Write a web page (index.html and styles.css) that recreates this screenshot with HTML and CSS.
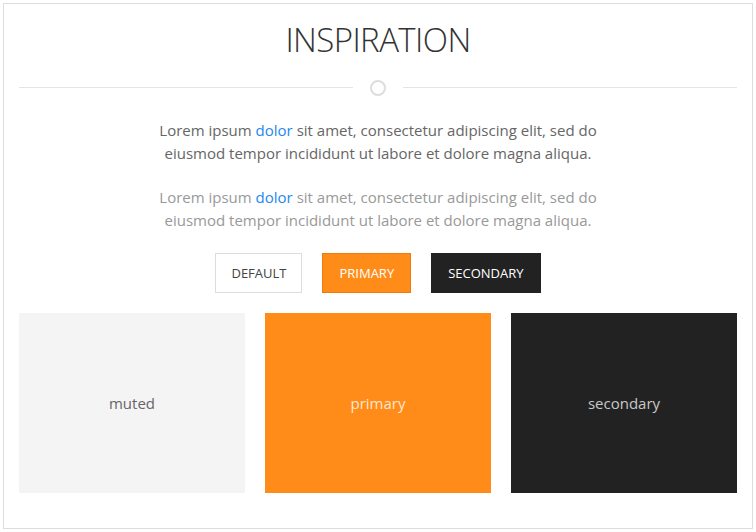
FILE: index.html
```
<!DOCTYPE html>
<html>
<head>
<meta charset="utf-8">
<link rel="stylesheet" href="styles.css">
</head>
<body>
<div class="card">
  <h1 class="title">INSPIRATION</h1>
  <div class="divider"><span class="line"></span><span class="ring"></span><span class="line"></span></div>
  <p class="lead">Lorem ipsum <a href="#">dolor</a> sit amet, consectetur adipiscing elit, sed do eiusmod tempor incididunt ut labore et dolore magna aliqua.</p>
  <p class="lead faded">Lorem ipsum <a href="#">dolor</a> sit amet, consectetur adipiscing elit, sed do eiusmod tempor incididunt ut labore et dolore magna aliqua.</p>
  <div class="buttons">
    <a class="btn btn-default" href="#">Default</a>
    <a class="btn btn-primary" href="#">Primary</a>
    <a class="btn btn-secondary" href="#">Secondary</a>
  </div>
  <div class="tiles">
    <div class="tile tile-muted">muted</div>
    <div class="tile tile-primary">primary</div>
    <div class="tile tile-secondary">secondary</div>
  </div>
</div>
</body>
</html>
```
FILE: styles.css
```
* { box-sizing: border-box; }
html, body { margin: 0; padding: 0; background: #fff; }
body {
  padding: 3px;
  font-family: "Open Sans", "Noto Sans", sans-serif;
  color: #666;
}
.card {
  width: 750px;
  height: 526px;
  border: 1px solid #ddd;
  padding: 15px 15px 0;
}
.title {
  margin: 0;
  text-align: center;
  font-weight: 300;
  font-size: 33px;
  letter-spacing: -0.6px;
  line-height: 41px;
  color: #333;
}
.divider {
  display: flex;
  align-items: center;
  margin-top: 20px;
  height: 15px;
}
.line { flex: 1; height: 1px; background: #e5e5e5; }
.ring {
  width: 16px; height: 16px;
  border: 2px solid #ddd;
  border-radius: 50%;
  margin: 0 17px;
}
.lead {
  width: 470px;
  margin: 24px auto 0;
  text-align: center;
  font-size: 15px;
  line-height: 23px;
  color: #666;
}
.lead + .lead { margin-top: 21px; }
.lead.faded { color: #999; }
.lead a { color: #1e87f0; text-decoration: none; }
.buttons {
  display: flex;
  justify-content: center;
  gap: 20px;
  margin-top: 21px;
}
.btn {
  display: inline-flex;
  align-items: center;
  justify-content: center;
  height: 40px;
  padding: 0 16px;
  font-size: 13px;
  text-transform: uppercase;
  text-decoration: none;
  border: 1px solid transparent;
}
.btn-default { border-color: #ddd; color: #444; background: #fff; padding: 0 15px; }
.btn-primary { background: #ff8c19; border-color: #ec7d0c; color: #fff; }
.btn-secondary { background: #222; color: #fff; }
.tiles {
  display: grid;
  grid-template-columns: repeat(3, 1fr);
  gap: 20px;
  margin-top: 20px;
}
.tile {
  height: 180px;
  display: flex;
  align-items: center;
  justify-content: center;
  font-size: 15px;
}
.tile-muted { background: #f4f4f4; color: #666; }
.tile-primary { background: #ff8c19; color: rgba(255,255,255,0.8); }
.tile-secondary { background: #222; color: #c8c8c8; }
```
